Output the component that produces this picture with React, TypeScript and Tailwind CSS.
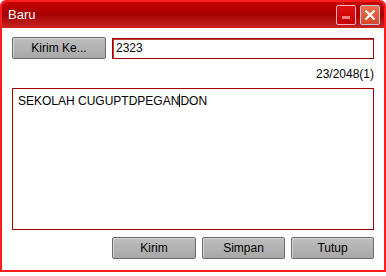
import React from "react";

const btn =
  "h-[22px] border border-[#6b6b6b] rounded-[2px] bg-gradient-to-b from-[#bebebe] to-[#a8a8a8] text-[12px] text-black flex items-center justify-center shadow-[inset_1px_1px_0_#d4d4d4]";

export default function App() {
  return (
    <div className="w-[386px] h-[276px] bg-white" style={{ fontFamily: '"Liberation Sans", Arial, sans-serif' }}>
      <div className="w-[386px] h-[272px] border-2 border-[#ff1c1c] rounded-t-[6px] flex flex-col overflow-hidden">
        <div className="h-[26px] shrink-0 bg-gradient-to-b from-[#c80000] via-[#a60000] to-[#c42020] flex items-center pl-[6px] pr-[4px] border-b border-[#d02020]">
          <span className="text-white text-[13px] leading-none">Baru</span>
          <div className="ml-auto flex gap-[4px] items-center">
            <div className="w-[20px] h-[20px] border border-[#f4b0c0] bg-gradient-to-b from-[#e01010] to-[#c80000] rounded-[2px] flex items-end justify-center pb-[5px]">
              <div className="w-[8px] h-[3px] bg-[#f08080]" />
            </div>
            <div className="w-[20px] h-[20px] border border-[#b8c8f0] bg-gradient-to-b from-[#f07048] to-[#d84828] rounded-[2px] flex items-center justify-center">
              <svg width="12" height="12" viewBox="0 0 12 12">
                <path d="M1.5 1.5 L10.5 10.5 M10.5 1.5 L1.5 10.5" stroke="white" strokeWidth="2.2" />
              </svg>
            </div>
          </div>
        </div>
        <div className="flex-1 flex flex-col px-[10px] pt-[9px]">
          <div className="flex gap-[6px] items-center">
            <button className={btn + " w-[94px]"}>Kirim Ke...</button>
            <div className="flex-1 h-[21px] border border-[#a00000] shadow-[inset_1px_1px_0_#c04040] flex items-center px-[3px] text-[12px] text-black">
              2323
            </div>
          </div>
          <div className="text-right text-[12px] text-black mt-[8px] leading-[14px]">23/2048(1)</div>
          <div className="mt-[7px] h-[142px] border border-[#a00000] px-[5px] pt-[5px] text-[12px] text-black leading-[14px]">
            SEKOLAH CUGUPTDPEGAN<span className="inline-block w-[1px] h-[13px] bg-black align-[-2px]" />DON
          </div>
          <div className="flex justify-end gap-[6px] mt-[7px]">
            <button className={btn + " w-[84px]"}>Kirim</button>
            <button className={btn + " w-[83px]"}>Simpan</button>
            <button className={btn + " w-[83px]"}>Tutup</button>
          </div>
        </div>
      </div>
    </div>
  );
}
